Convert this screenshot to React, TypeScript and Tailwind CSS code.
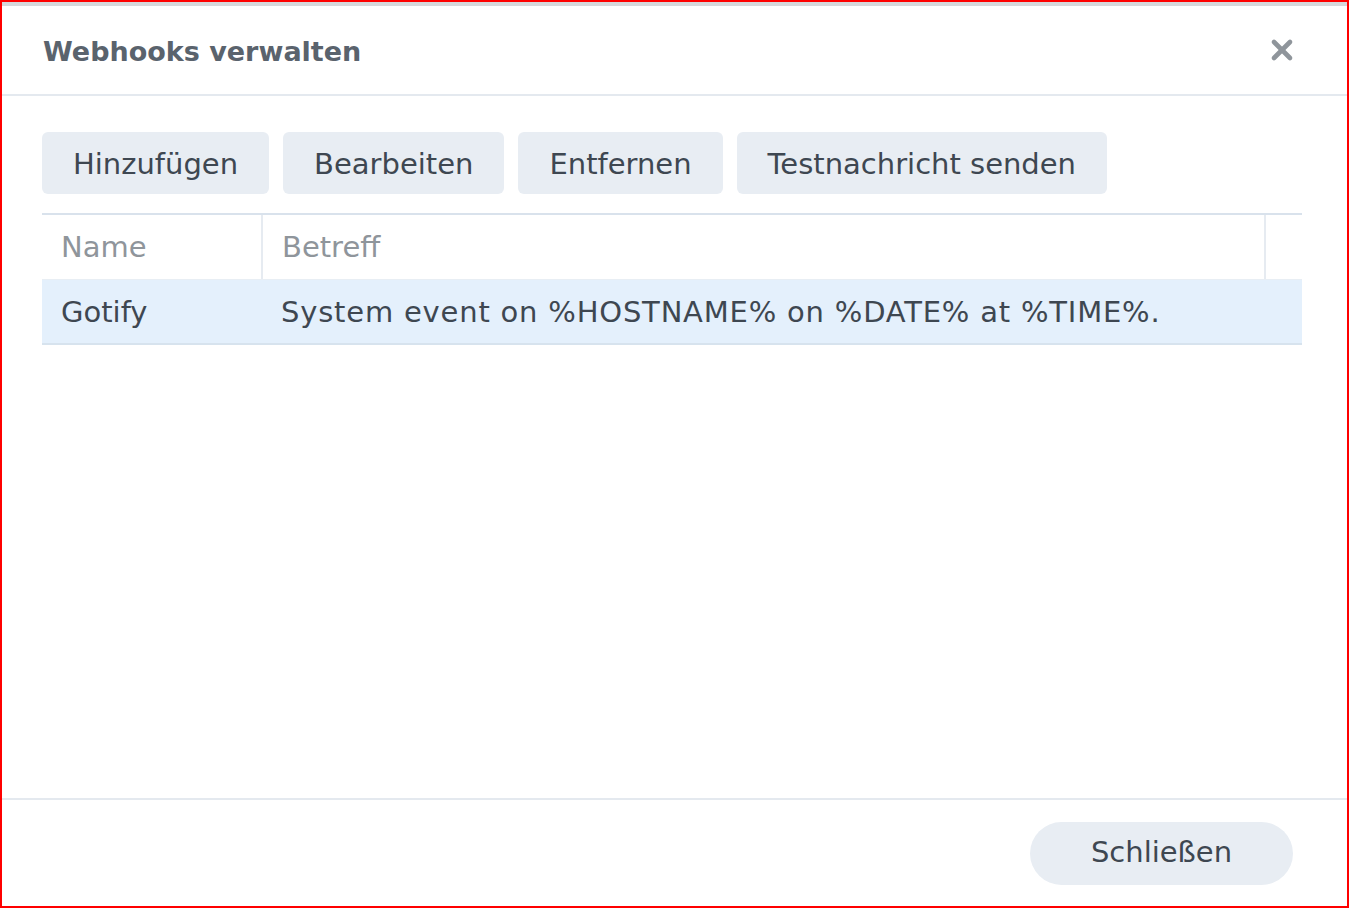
import { X } from 'lucide-react';

const actions = ['Hinzufügen', 'Bearbeiten', 'Entfernen', 'Testnachricht senden'];

const rows = [
  { name: 'Gotify', subject: 'System event on %HOSTNAME% on %DATE% at %TIME%.' },
];

export default function App() {
  return (
    <div className="h-[908px] w-[1349px] border-2 border-[#ff0000] bg-white font-['DejaVu_Sans',sans-serif] text-[#3e4751]">
      <div className="flex h-full flex-col border-t-4 border-t-[#d6d8db]">
        {/* Header */}
        <div className="flex h-[90px] shrink-0 items-center justify-between border-b-2 border-[#e4e9ef] pl-[41px] pr-[49px]">
          <h1 className="pt-[4px] text-[27px] font-bold text-[#5a636d]">Webhooks verwalten</h1>
          <X className="h-[32px] w-[32px] text-[#8f959b]" strokeWidth={3.5} />
        </div>

        {/* Body */}
        <div className="flex flex-1 flex-col px-[40px] pt-[36px]">
          <div className="flex gap-[14px]">
            {actions.map((label) => (
              <button
                key={label}
                className="h-[62px] rounded-[6px] bg-[#e8edf3] px-[31px] pt-[3px] text-[29px] text-[#3e4751]"
              >
                {label}
              </button>
            ))}
          </div>

          <div className="mt-[19px] w-[1260px] border-t-2 border-[#d9e2ec]">
            <div className="flex h-[64px] items-center text-[29px] text-[#8f959b]">
              <div className="flex h-full w-[221px] items-center border-r-2 border-[#e6ebf1] pl-[19px] pt-[2px]">Name</div>
              <div className="flex h-full flex-1 items-center border-r-2 border-[#e6ebf1] pl-[19px] pt-[2px]">Betreff</div>
              <div className="w-[36px]" />
            </div>
            {rows.map((row) => (
              <div
                key={row.name}
                className="flex h-[66px] items-center border-t border-b-2 border-t-[#e8eef4] border-b-[#d7e3ee] bg-[#e4f0fc] pt-[3px] text-[29px]"
              >
                <div className="w-[221px] pl-[19px]">{row.name}</div>
                <div className="flex-1 pl-[18px] tracking-[0.8px]">{row.subject}</div>
              </div>
            ))}
          </div>
        </div>

        {/* Footer */}
        <div className="flex h-[108px] shrink-0 items-center justify-end border-t-2 border-[#e4e9ef] pr-[54px]">
          <button className="h-[63px] w-[263px] rounded-full bg-[#e8edf3] text-[29px] text-[#3e4751]">Schließen</button>
        </div>
      </div>
    </div>
  );
}
